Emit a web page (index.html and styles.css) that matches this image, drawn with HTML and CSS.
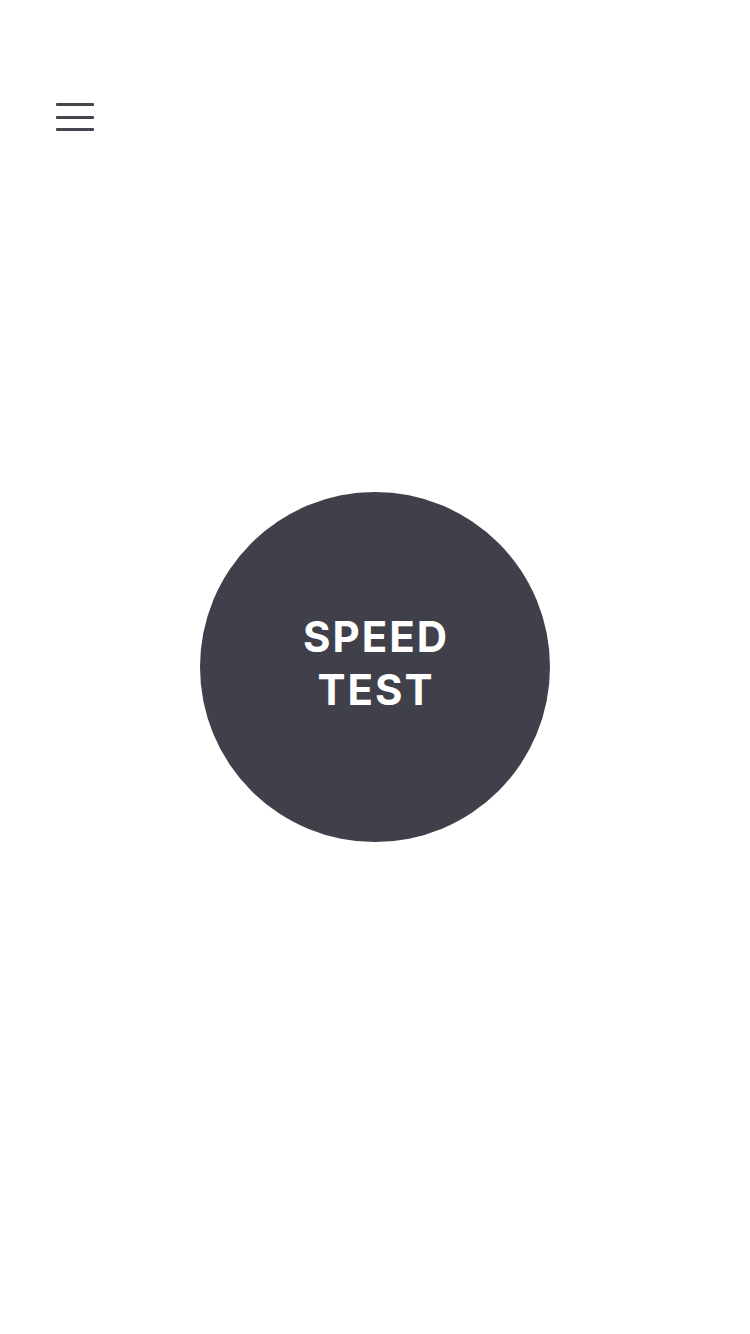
FILE: index.html
```html
<!DOCTYPE html>
<html>
<head>
<meta charset="utf-8">
<link rel="stylesheet" href="styles.css">
</head>
<body>
<div class="page">
  <header class="topbar">
    <button class="menu" aria-label="Menu">
      <span class="bar"></span>
      <span class="bar"></span>
      <span class="bar"></span>
    </button>
  </header>
  <main class="main">
    <button class="speed">SPEED<br>TEST</button>
  </main>
</div>
</body>
</html>
```
FILE: styles.css
```css
html, body {
  margin: 0;
  padding: 0;
  background: #ffffff;
}
.page {
  width: 750px;
  height: 1334px;
  display: flex;
  flex-direction: column;
  font-family: Inter, "Liberation Sans", sans-serif;
}
.topbar {
  padding: 103px 0 0 56px;
  height: 29px;
}
.menu {
  width: 38px;
  height: 28px;
  padding: 0;
  border: 0;
  background: none;
  display: flex;
  flex-direction: column;
  justify-content: space-between;
}
.bar {
  display: block;
  width: 38px;
  height: 3px;
  background: #45454d;
  border-radius: 1px;
}
.main {
  display: flex;
  justify-content: center;
  padding-top: 360px;
}
.speed {
  width: 350px;
  height: 350px;
  border-radius: 50%;
  border: 0;
  background: #40404a;
  color: #ffffff;
  font-family: Inter, "Liberation Sans", sans-serif;
  font-weight: 700;
  font-size: 42px;
  line-height: 53px;
  letter-spacing: 2px;
  padding: 0 0 9px 2px;
}
```
